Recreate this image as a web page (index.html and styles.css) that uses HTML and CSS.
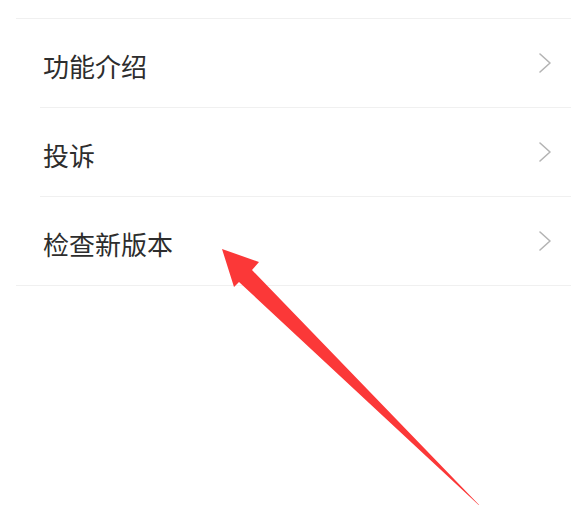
FILE: index.html
```html
<!DOCTYPE html>
<html lang="zh">
<head>
<meta charset="utf-8">
<link rel="stylesheet" href="styles.css">
</head>
<body>
<div class="page">
  <ul class="menu">
    <li class="item"><span class="label">功能介绍</span><svg class="chev" viewBox="0 0 14 22"><polyline points="2,2 12,11 2,20"/></svg></li>
    <li class="item"><span class="label">投诉</span><svg class="chev" viewBox="0 0 14 22"><polyline points="2,2 12,11 2,20"/></svg></li>
    <li class="item"><span class="label">检查新版本</span><svg class="chev" viewBox="0 0 14 22"><polyline points="2,2 12,11 2,20"/></svg></li>
  </ul>
  <svg class="arrow" viewBox="0 0 571 505" width="571" height="505">
    <polygon points="222,249 259,262 252,270 484,510 239,282 234,287"/>
  </svg>
</div>
</body>
</html>
```
FILE: styles.css
```css
html, body {
  margin: 0;
  padding: 0;
  background: #ffffff;
}
.page {
  position: relative;
  width: 571px;
  height: 505px;
  overflow: hidden;
  font-family: "Noto Sans CJK SC", "Noto Sans", sans-serif;
}
.menu {
  list-style: none;
  margin: 18px 0 0 16px;
  padding: 0;
  border-top: 1px solid #f0f0f0;
  border-bottom: 1px solid #f0f0f0;
}
.item {
  display: flex;
  align-items: center;
  justify-content: space-between;
  height: 88px;
  margin-left: 24px;
  padding: 0 19px 0 3px;
}
.item + .item {
  border-top: 1px solid #f0f0f0;
}
.label {
  font-size: 26px;
  line-height: 30px;
  color: #2d2d2d;
  margin-top: 6px;
}
.chev {
  width: 14px;
  height: 22px;
  fill: none;
  stroke: #b4b4b4;
  stroke-width: 1.6;
  stroke-linecap: round;
  stroke-linejoin: round;
}
.arrow {
  position: absolute;
  left: 0;
  top: 0;
}
.arrow polygon {
  fill: #fb3838;
}
```
